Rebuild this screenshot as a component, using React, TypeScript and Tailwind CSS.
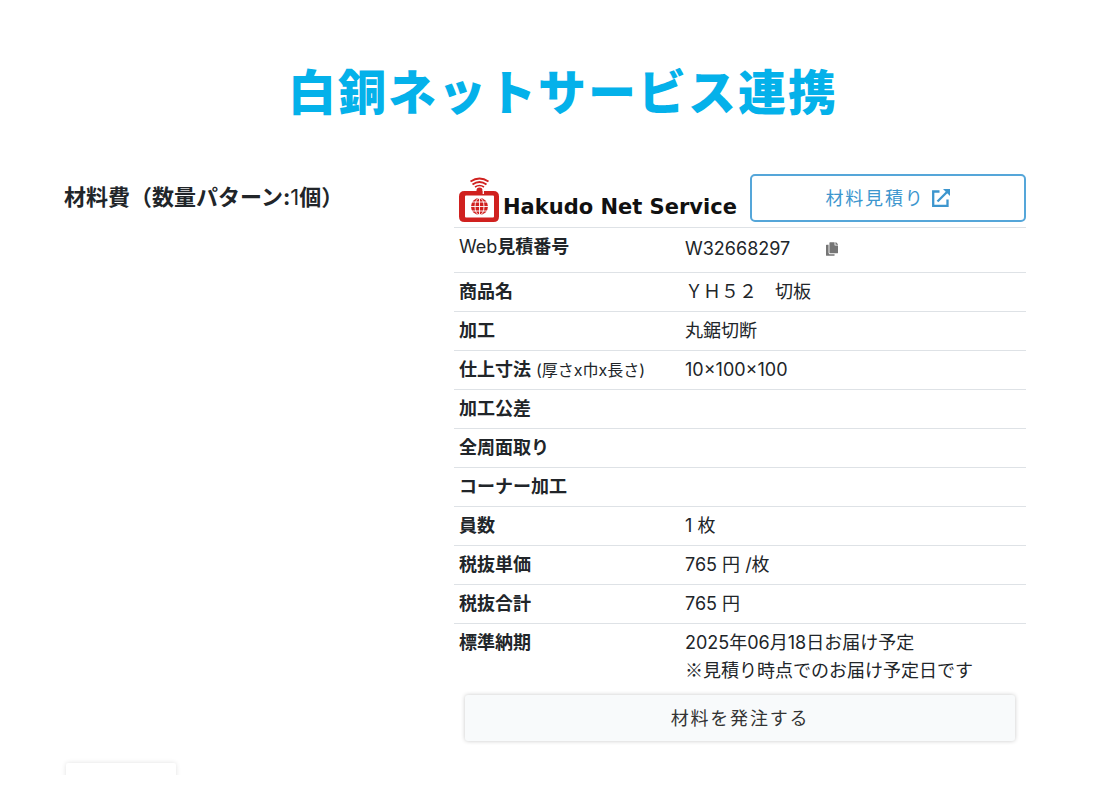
import { useState } from 'react'
import { FaCopy } from 'react-icons/fa'

const QUOTE_NO = 'W32668297'

const rows = [
  { label: '商品名', value: 'ＹＨ５２　切板' },
  { label: '加工', value: '丸鋸切断' },
  { label: '仕上寸法', note: '(厚さx巾x長さ)', value: '10×100×100' },
  { label: '加工公差', value: '' },
  { label: '全周面取り', value: '' },
  { label: 'コーナー加工', value: '' },
  { label: '員数', value: '1 枚' },
  { label: '税抜単価', value: '765 円 /枚' },
  { label: '税抜合計', value: '765 円' },
]

function HakudoMark() {
  return (
    <svg viewBox="0 0 40 45" className="w-10 h-[45px] shrink-0" fill="none" stroke="#d0211f" aria-hidden="true">
      {/* wireless waves */}
      <path d="M11.5 4.5Q20.5 -1.5 29.5 4.5" strokeWidth="1.8" />
      <path d="M13.5 7.5Q20.5 2.5 27.5 7.5" strokeWidth="1.8" />
      <path d="M16 10Q20.5 7 25 10" strokeWidth="1.6" />
      <path d="M17.5 17V13.5Q17.5 10.500 20.500 10.500T23.500 13.5V17Z" fill="#d0211f" stroke="none" />
      {/* device frame */}
      <path
        d="M5.500 14H34.500Q40 14 40 19.500V39.500Q40 45 34.500 45H5.500Q0 45 0 39.500V19.500Q0 14 5.500 14ZM7 18.500Q6 18.500 6 19.500V39.500Q6 40.500 7 40.500H34Q35 40.500 35 39.500V19.500Q35 18.500 34 18.500Z"
        fill="#d0211f"
        fillRule="evenodd"
        stroke="none"
      />
      <path d="M24.300 13V17" stroke="#fff" strokeWidth="1.300" />
      {/* globe */}
      <circle cx="20.500" cy="29.500" r="8.500" fill="#d0211f" stroke="none" />
      <g stroke="#fff" strokeWidth="0.900">
        <path d="M20.500 20V39M11 29.500H30M12 25H29M12 34H29" />
        <ellipse cx="20.500" cy="29.500" rx="4.500" ry="8.500" />
      </g>
    </svg>
  )
}

function ExternalLinkIcon() {
  return (
    <svg viewBox="0 0 20 20" className="w-5 h-5" fill="none" stroke="currentColor" strokeWidth="2.300" aria-hidden="true">
      <path d="M8.500 3.500H2.200V17.800H16.500V11.500" />
      <path d="M6.500 13.500L16 4" />
      <path d="M12 1H19V8Z" fill="currentColor" stroke="none" />
    </svg>
  )
}

export default function App() {
  const [copied, setCopied] = useState(false)

  async function handleCopy() {
    await navigator.clipboard.writeText(QUOTE_NO)
    setCopied(true)
  }

  return (
    <main className="pt-[53px] pl-16 pr-[74px] bg-white text-[#212529] font-['Inter','Noto_Sans_CJK_JP',sans-serif] text-[18px] leading-[27px]">
      <h1 className="text-center text-[48px] leading-[72px] font-black tracking-[2px] text-[#04b1ea] font-['Noto_Sans_CJK_JP',sans-serif] pl-9">
        白銅ネットサービス連携
      </h1>

      <div className="mt-[49px] grid grid-cols-[15fr_22fr]">
        <h2 className="pt-2 text-[22px] leading-[30px] font-bold">
          材料費（数量パターン:<span className="font-normal">1</span>個）
        </h2>

        <section>
          <div className="flex items-end border-b border-[#dee2e6] pl-[5px] pb-[5px]">
            <HakudoMark />
            <span className="ml-1 mb-1 flex-1 whitespace-nowrap font-['DejaVu_Sans'] font-bold text-[21px] leading-[22px] text-[#111]">
              Hakudo Net Service
            </span>
            <button
              type="button"
              className="w-[276px] h-12 flex items-center justify-center gap-[6px] rounded-[5px] border-2 border-[#55a6d9] tracking-widest text-[#3d96ce] hover:bg-sky-50"
            >
              材料見積り
              <ExternalLinkIcon />
            </button>
          </div>

          <table className="w-full table-fixed text-left">
            <colgroup>
              <col className="w-[226px]" />
              <col />
            </colgroup>
            <tbody className="align-top">
              <tr className="border-b border-[#dee2e6]">
                <th scope="row" className="px-[5px] pt-[5px] font-bold">
                  <span className="font-normal">Web</span>見積番号
                </th>
                <td className="px-[5px] pt-[7px] pb-[10px]">
                  <div className="flex items-center gap-9">
                    {QUOTE_NO}
                    <button
                      type="button"
                      onClick={handleCopy}
                      aria-label={copied ? 'コピーしました' : 'コピー'}
                      className="text-[#757575]"
                    >
                      <FaCopy className="w-3 h-[14px]" />
                    </button>
                  </div>
                </td>
              </tr>
              {rows.map((r) => (
                <tr key={r.label} className="border-b border-[#dee2e6]">
                  <th scope="row" className="px-[5px] pt-[5px] pb-[6px] font-bold">
                    {r.label}
                    {r.note && <span className="ml-[5px] text-[16px] leading-none font-normal">{r.note}</span>}
                  </th>
                  <td className="px-[5px] pt-[5px] pb-[6px]">{r.value}</td>
                </tr>
              ))}
              <tr>
                <th scope="row" className="px-[5px] pt-[5px] font-bold">標準納期</th>
                <td className="px-[5px] pt-[5px]">
                  2025年06月18日お届け予定
                  <p className="font-['Noto_Sans_CJK_JP',sans-serif]">※見積り時点でのお届け予定日です</p>
                </td>
              </tr>
            </tbody>
          </table>

          <div className="px-[11px] pt-3">
            <button
              type="button"
              className="w-full h-[46px] rounded-[3px] bg-[#f8fafb] tracking-widest text-[#333] shadow-[0_0_4px_rgba(0,0,0,0.22)] hover:bg-gray-100"
            >
              材料を発注する
            </button>
          </div>
        </section>
      </div>

      <div className="mt-4 -ml-2 h-[18px] w-[130px] overflow-hidden px-[10px] pt-[6px]">
        <div className="h-10 rounded-[2px] bg-white shadow-[0_0_5px_rgba(0,0,0,0.12)]" />
      </div>
    </main>
  )
}
